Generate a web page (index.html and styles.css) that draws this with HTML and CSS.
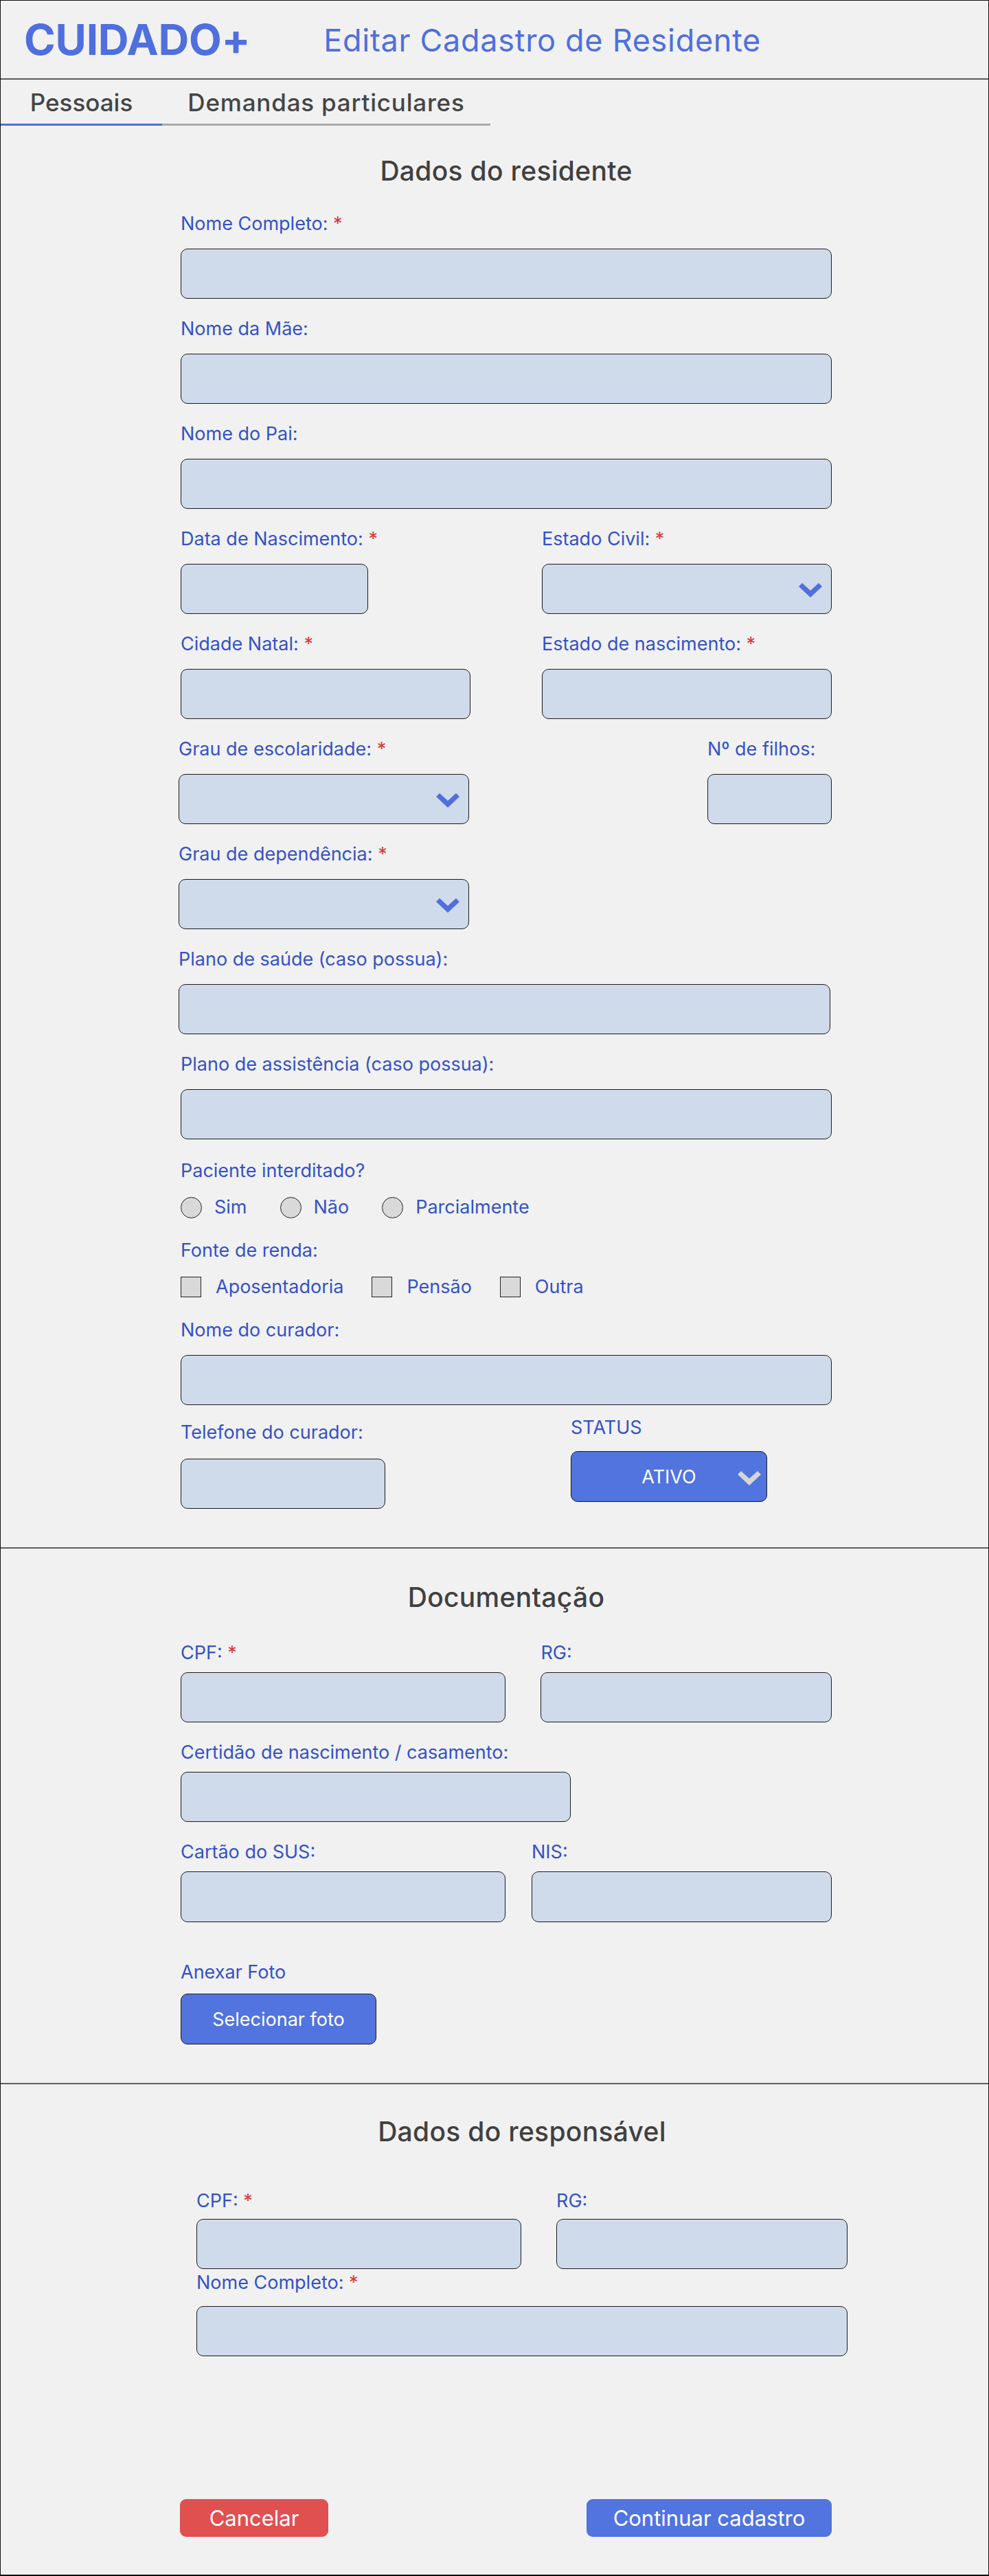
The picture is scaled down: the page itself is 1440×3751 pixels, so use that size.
FILE: index.html
```html
<!DOCTYPE html>
<html lang="pt-BR">
<head>
<meta charset="utf-8">
<title>Editar Cadastro de Residente</title>
<link rel="stylesheet" href="styles.css">
</head>
<body>
<div class="page">
  <header class="topbar">
    <span class="logo">CUIDADO+</span>
    <h1 class="page-title">Editar Cadastro de Residente</h1>
  </header>

  <nav class="tabs">
    <a class="tab tab-active">Pessoais</a>
    <a class="tab tab-second">Demandas particulares</a>
  </nav>

  <section class="section section-residente">
    <div class="form">
      <h2 class="section-title">Dados do residente</h2>

      <div class="field">
        <label class="label">Nome Completo: <span class="req">*</span></label>
        <div class="input"></div>
      </div>
      <div class="field">
        <label class="label">Nome da Mãe:</label>
        <div class="input"></div>
      </div>
      <div class="field">
        <label class="label">Nome do Pai:</label>
        <div class="input"></div>
      </div>

      <div class="grid2 field">
        <div>
          <label class="label">Data de Nascimento: <span class="req">*</span></label>
          <div class="input w-date"></div>
        </div>
        <div>
          <label class="label">Estado Civil: <span class="req">*</span></label>
          <div class="input select">
            <svg class="chev" viewBox="0 0 34 21"><polygon points="0,5 5,0 17,11 29,0 34,5 17,21"/></svg>
          </div>
        </div>
      </div>

      <div class="grid2 field">
        <div>
          <label class="label">Cidade Natal: <span class="req">*</span></label>
          <div class="input"></div>
        </div>
        <div>
          <label class="label">Estado de nascimento: <span class="req">*</span></label>
          <div class="input"></div>
        </div>
      </div>

      <div class="grid2 field">
        <div class="shift-left">
          <label class="label">Grau de escolaridade: <span class="req">*</span></label>
          <div class="input select w-select">
            <svg class="chev" viewBox="0 0 34 21"><polygon points="0,5 5,0 17,11 29,0 34,5 17,21"/></svg>
          </div>
        </div>
        <div class="col-end">
          <label class="label">Nº de filhos:</label>
          <div class="input w-filhos"></div>
        </div>
      </div>

      <div class="field shift-left">
        <label class="label">Grau de dependência: <span class="req">*</span></label>
        <div class="input select w-select">
          <svg class="chev" viewBox="0 0 34 21"><polygon points="0,5 5,0 17,11 29,0 34,5 17,21"/></svg>
        </div>
      </div>

      <div class="field shift-left">
        <label class="label">Plano de saúde (caso possua):</label>
        <div class="input w-plano"></div>
      </div>

      <div class="field field-assist">
        <label class="label">Plano de assistência (caso possua):</label>
        <div class="input"></div>
      </div>

      <div class="field field-choice">
        <label class="label label-choice">Paciente interditado?</label>
        <div class="choices radios">
          <span class="choice"><span class="radio"></span>Sim</span>
          <span class="choice"><span class="radio"></span>Não</span>
          <span class="choice"><span class="radio"></span>Parcialmente</span>
        </div>
      </div>

      <div class="field field-choice2">
        <label class="label label-choice">Fonte de renda:</label>
        <div class="choices checks">
          <span class="choice"><span class="check"></span>Aposentadoria</span>
          <span class="choice"><span class="check"></span>Pensão</span>
          <span class="choice"><span class="check"></span>Outra</span>
        </div>
      </div>

      <div class="field field-curador">
        <label class="label">Nome do curador:</label>
        <div class="input"></div>
      </div>

      <div class="last-row">
        <div class="tel-col">
          <label class="label label-tel">Telefone do curador:</label>
          <div class="input w-tel"></div>
        </div>
        <div class="status-col">
          <label class="label label-status">STATUS</label>
          <div class="status-select">
            <span class="status-text">ATIVO</span>
            <svg class="chev chev-light" viewBox="0 0 34 21"><polygon points="0,5 5,0 17,11 29,0 34,5 17,21"/></svg>
          </div>
        </div>
      </div>
    </div>
  </section>

  <section class="section section-docs">
    <div class="form form-docs">
      <h2 class="section-title title-docs">Documentação</h2>

      <div class="row row-cpf field-docs">
        <div class="w-cpf">
          <label class="label">CPF: <span class="req">*</span></label>
          <div class="input"></div>
        </div>
        <div class="w-rg">
          <label class="label">RG:</label>
          <div class="input"></div>
        </div>
      </div>

      <div class="field-docs">
        <label class="label">Certidão de nascimento / casamento:</label>
        <div class="input w-certidao"></div>
      </div>

      <div class="row row-sus">
        <div class="w-sus">
          <label class="label">Cartão do SUS:</label>
          <div class="input input-tall"></div>
        </div>
        <div class="w-nis">
          <label class="label">NIS:</label>
          <div class="input input-tall"></div>
        </div>
      </div>

      <div class="foto">
        <label class="label label-foto">Anexar Foto</label>
        <button class="btn btn-foto" type="button">Selecionar foto</button>
      </div>
    </div>
  </section>

  <section class="section section-resp">
    <div class="form form-resp">
      <h2 class="section-title title-resp">Dados do responsável</h2>

      <div class="row row-cpf">
        <div class="w-cpf2">
          <label class="label">CPF: <span class="req">*</span></label>
          <div class="input"></div>
        </div>
        <div class="w-rg">
          <label class="label">RG:</label>
          <div class="input"></div>
        </div>
      </div>

      <div class="field-tight">
        <label class="label label-tight">Nome Completo: <span class="req">*</span></label>
        <div class="input"></div>
      </div>
    </div>

    <div class="actions">
      <button class="btn btn-cancel" type="button">Cancelar</button>
      <button class="btn btn-continue" type="button">Continuar cadastro</button>
    </div>
  </section>
</div>
</body>
</html>
```

FILE: styles.css
```css
* { box-sizing: border-box; }

html, body {
  margin: 0;
  padding: 0;
  background: #f1f1f1;
}

body {
  font-family: Inter, "Noto Sans", "Liberation Sans", sans-serif;
}

.page {
  width: 1440px;
  height: 3751px;
  border: 1px solid #111;
  border-bottom-width: 2px;
  background: #f1f1f1;
  overflow: hidden;
}

/* ---------- header ---------- */
.topbar {
  display: flex;
  align-items: center;
  height: 115px;
  padding-left: 34px;
  border-bottom: 2px solid #5a5a5a;
}

.logo {
  font-size: 62px;
  font-weight: 700;
  color: #4f6fde;
  letter-spacing: -0.3px;
  line-height: 1;
}

.page-title {
  margin: 0 0 0 107px;
  font-size: 45px;
  font-weight: 400;
  color: #4f6fde;
  letter-spacing: 0.7px;
  line-height: 1;
  padding-top: 2px;
}

/* ---------- tabs ---------- */
.tabs {
  display: flex;
  padding-top: 13px;
}

.tab {
  display: block;
  font-size: 35px;
  line-height: 40px;
  font-weight: 500;
  color: #454545;
  text-align: center;
  padding-bottom: 11px;
  border-bottom: 3px solid #aaaaaa;
}

.tab-active {
  width: 235px;
  border-bottom-color: #4f6fde;
}

.tab-second {
  width: 478px;
  letter-spacing: 0.8px;
}

/* ---------- sections ---------- */
.section {
  border-bottom: 2px solid #5f5f5f;
}

.section-residente {
  padding-top: 43px;
  height: 2072px;
}

.section-docs {
  padding-top: 48px;
  height: 780px;
}

.section-resp {
  border-bottom: none;
  padding-top: 46px;
}

.form {
  width: 948px;
  margin-left: 262px;
}

.form-resp {
  margin-left: 285px;
}

.section-title {
  margin: 0 0 38px;
  font-size: 39px;
  line-height: 46px;
  font-weight: 500;
  color: #404040;
  letter-spacing: 0.3px;
  text-align: center;
}

.title-docs {
  margin-bottom: 41.5px;
}

.title-resp {
  margin-bottom: 61.5px;
}

/* ---------- fields ---------- */
.field {
  margin-bottom: 28px;
}

.label {
  display: block;
  font-size: 27px;
  line-height: 32px;
  color: #3452c5;
  margin-bottom: 20px;
  white-space: nowrap;
}

.req {
  color: #d63a3a;
}

.input {
  height: 73px;
  border: 1px solid #1c1c1c;
  border-radius: 10px;
  background: #cfdaea;
}

.input-tall {
  height: 74px;
}

.select {
  display: flex;
  align-items: center;
  justify-content: flex-end;
  padding-right: 13px;
  padding-top: 3px;
}

.chev {
  width: 34px;
  height: 21px;
  fill: #4f6fde;
  display: block;
}

.chev-light {
  fill: #d6d6d6;
}

.grid2 {
  display: grid;
  grid-template-columns: 422px 422px;
  column-gap: 104px;
}

.col-end {
  justify-self: end;
}

.shift-left {
  margin-left: -3px;
}

.w-date { width: 273px; }
.w-select { width: 423px; }
.w-filhos { width: 181px; }
.w-plano { width: 949px; }
.w-tel { width: 298px; }
.w-certidao { width: 568px; }

/* ---------- choices ---------- */
.field-assist {
  margin-bottom: 30px;
}

.label-choice {
  margin-bottom: 21px;
}

.field-choice {
  margin-bottom: 31px;
}

.field-choice2 {
  margin-bottom: 31px;
}

.choices {
  display: flex;
  align-items: center;
  font-size: 27px;
  line-height: 32px;
  color: #3452c5;
}

.choice {
  display: flex;
  align-items: center;
}

.radios .choice {
  gap: 18px;
  margin-right: 48px;
}

.checks .choice {
  gap: 21px;
  margin-right: 41px;
}

.radio {
  width: 31px;
  height: 31px;
  border: 1px solid #222;
  border-radius: 50%;
  background: #d9d9d9;
}

.check {
  width: 30px;
  height: 30px;
  border: 1px solid #222;
  background: #d9d9d9;
}

.field-curador {
  margin-bottom: 17px;
}

/* ---------- last row ---------- */
.last-row {
  display: flex;
  align-items: flex-start;
}

.tel-col {
  padding-top: 7px;
}

.label-tel {
  margin-bottom: 22px;
}

.status-col {
  margin-left: 270px;
}

.label-status {
  margin-bottom: 18px;
}

.status-select {
  width: 286px;
  height: 74px;
  border: 1px solid #1c1c1c;
  border-radius: 10px;
  background: #5174df;
  display: grid;
  grid-template-columns: 1fr auto 1fr;
  align-items: center;
  padding-right: 8px;
  padding-left: 8px;
}

.status-text {
  grid-column: 2;
  font-size: 27px;
  color: #ffffff;
}

.status-select .chev {
  grid-column: 3;
  justify-self: end;
  margin-top: 4px;
}

/* ---------- rows ---------- */
.row {
  display: flex;
}

.row-cpf {
  gap: 51px;
}

.row-sus {
  gap: 38px;
  margin-bottom: 56.5px;
}

.w-cpf { width: 474px; }
.w-cpf2 { width: 473px; }
.w-rg { width: 424px; }
.w-sus { width: 473px; }
.w-nis { width: 437px; }

.form-docs .label {
  margin-bottom: 12.5px;
}

.field-docs {
  margin-bottom: 27.5px;
}

.form-docs .label-foto {
  margin-bottom: 15.5px;
}

.form-resp .label {
  margin-bottom: 10.5px;
}

.form-resp .label-tight {
  margin-bottom: 18.5px;
}

.field-tight {
  margin-top: 3.5px;
}

/* ---------- buttons ---------- */
.btn {
  font-family: inherit;
  color: #ffffff;
  cursor: pointer;
}

.btn-foto {
  display: block;
  width: 285px;
  height: 74px;
  border: 1px solid #1c1c1c;
  border-radius: 10px;
  background: #5174df;
  font-size: 27px;
}

.actions {
  display: flex;
  margin-top: 208px;
  margin-left: 261px;
}

.btn-cancel,
.btn-continue {
  height: 55px;
  border: none;
  border-radius: 9px;
  font-size: 31px;
  line-height: 1;
}

.btn-cancel {
  width: 216px;
  background: #e05050;
}

.btn-continue {
  width: 357px;
  margin-left: 376px;
  background: #5174df;
}
```
